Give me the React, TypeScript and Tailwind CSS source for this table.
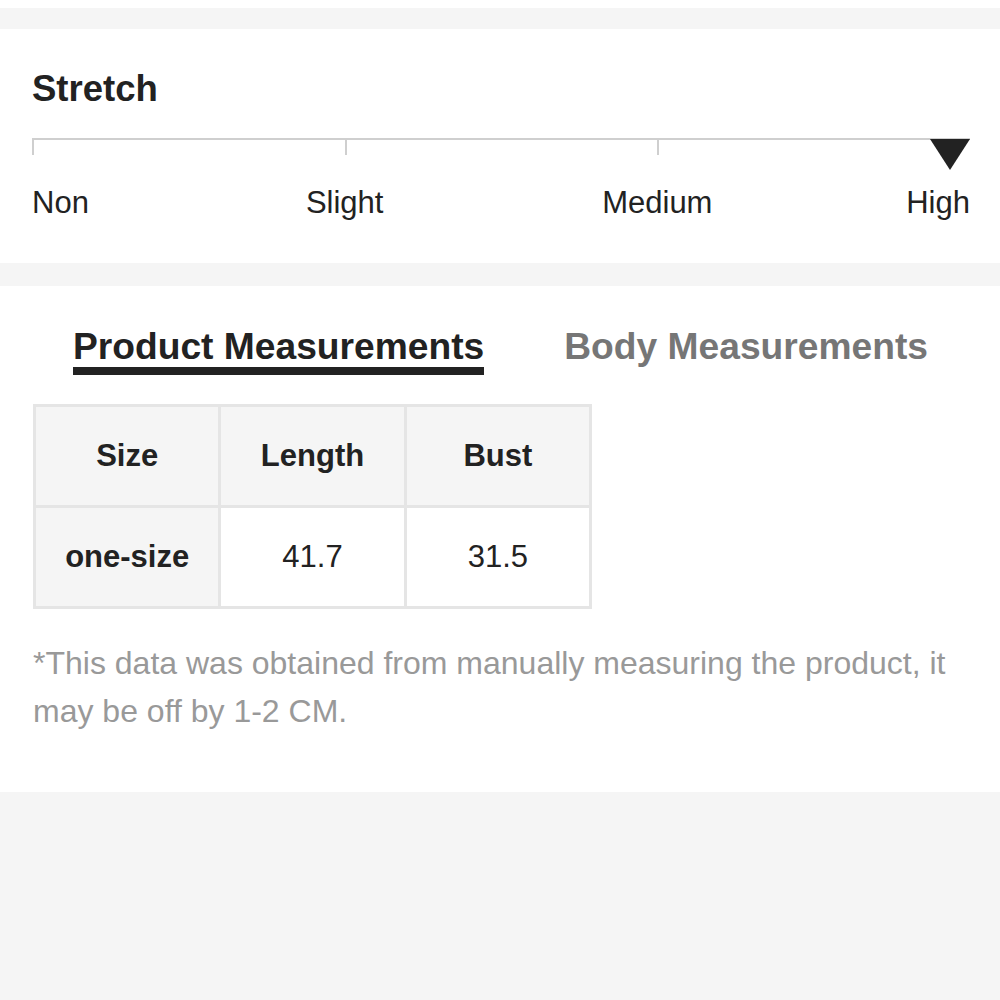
import React from "react";

const font = { fontFamily: '"Liberation Sans", Arial, sans-serif' };

const StretchScale: React.FC = () => {
  return (
    <section className="bg-white mt-[21px] px-[32px] pt-[40px] pb-[42px]">
      <h2 className="text-[36.5px] leading-[40px] font-bold text-[#222]">Stretch</h2>

      {/* track: line with ticks at 0, 1/3, 2/3 and the marker at the end */}
      <div className="relative mt-[29px] h-[32px] w-[938px]">
        <div className="grid grid-cols-3 border-t-2 border-[#cfcfcf]">
          <div className="h-[15px] border-l-2 border-[#cfcfcf]" />
          <div className="h-[15px] border-l-2 border-[#cfcfcf]" />
          <div className="h-[15px] border-l-2 border-[#cfcfcf]" />
        </div>
        <svg className="absolute right-0 top-[1px]" width="40" height="31" viewBox="0 0 40 31">
          <polygon points="0,0 40,0 20,31" fill="#222" />
        </svg>
      </div>

      <div className="grid grid-cols-6 mt-[15px] w-[938px] text-[31px] leading-[36px] text-[#222]">
        <span className="text-left">Non</span>
        <span className="col-span-2 text-center">Slight</span>
        <span className="col-span-2 text-center">Medium</span>
        <span className="text-right">High</span>
      </div>
    </section>
  );
};

const Measurements: React.FC = () => {
  return (
    <section className="bg-white mt-[23px] px-[33px] pt-[38px] pb-[57px]">
      <div className="flex gap-[80px] pl-[40px] text-[37.2px] leading-[44px] font-bold">
        <div className="text-[#222]">
          <div>Product Measurements</div>
          <div className="h-[8px] bg-[#222] -mt-[1px]" />
        </div>
        <div className="text-[#767676]">Body Measurements</div>
      </div>

      <table className="mt-[29px] w-[559px] border-collapse table-fixed text-[31px] text-[#222]">
        <tbody>
          <tr className="bg-[#f5f5f5] font-bold">
            <td className="h-[101px] border-[3px] border-[#e5e5e5] text-center">Size</td>
            <td className="h-[101px] border-[3px] border-[#e5e5e5] text-center">Length</td>
            <td className="h-[101px] border-[3px] border-[#e5e5e5] text-center">Bust</td>
          </tr>
          <tr>
            <td className="h-[101px] border-[3px] border-[#e5e5e5] bg-[#f5f5f5] text-center font-bold">one-size</td>
            <td className="h-[101px] border-[3px] border-[#e5e5e5] text-center">41.7</td>
            <td className="h-[101px] border-[3px] border-[#e5e5e5] text-center">31.5</td>
          </tr>
        </tbody>
      </table>

      <p className="mt-[30px] text-[32px] leading-[48px] text-[#999]">
        *This data was obtained from manually measuring the product, it may be off by 1-2 CM.
      </p>
    </section>
  );
};

export default function App() {
  return (
    <div className="flex flex-col h-[1000px] bg-[#f5f5f5]" style={font}>
      <div className="h-[8px] bg-white" />
      <StretchScale />
      <Measurements />
    </div>
  );
}
